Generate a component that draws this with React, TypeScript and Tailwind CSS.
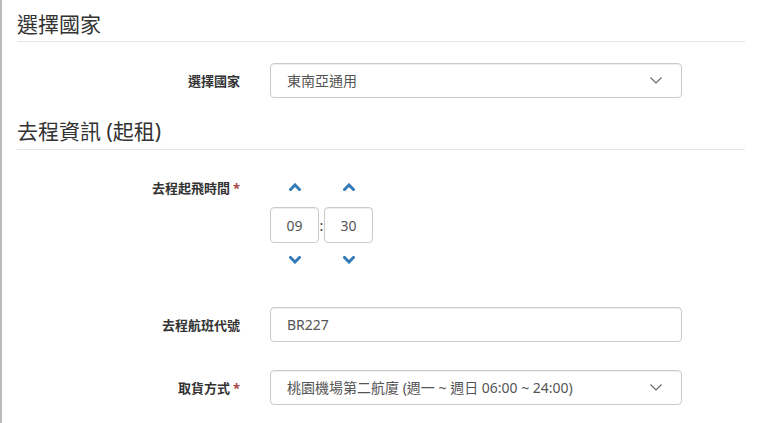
import type { ReactNode } from 'react'

const FONT = "font-['Segoe_UI','Noto_Sans','Noto_Sans_CJK_TC',sans-serif]"

function ChevronBold({ up }: { up?: boolean }) {
  return (
    <svg width="12" height="8" viewBox="0 0 12 8" className="block">
      <polyline
        points={up ? '1.5,6.5 6,2 10.5,6.5' : '1.5,1.5 6,6 10.5,1.5'}
        fill="none"
        stroke="#337ab7"
        strokeWidth="3"
        strokeLinecap="square"
      />
    </svg>
  )
}

function SelectCaret() {
  return (
    <svg width="12" height="7" viewBox="0 0 12 7" className="block">
      <polyline points="0.5,0.5 6,6 11.5,0.5" fill="none" stroke="#666" strokeWidth="1.1" />
    </svg>
  )
}

function SectionTitle({ children, className = '' }: { children: ReactNode; className?: string }) {
  return (
    <h3 className={`text-[21px] leading-[30px] font-normal text-[#333] border-b border-[#e5e5e5] pb-[2px] mr-[15px] ${className}`}>
      {children}
    </h3>
  )
}

function Label({ text, required, className = '' }: { text: string; required?: boolean; className?: string }) {
  return (
    <div className={`w-[223px] shrink-0 text-right text-[13px] font-bold text-[#333] leading-[20px] ${className}`}>
      {text}
      {required && <span className="text-[#a94442] ml-[3px]">*</span>}
    </div>
  )
}

function FakeSelect({ value }: { value: string }) {
  return (
    <div className="w-[412px] h-[35px] flex items-center justify-between pl-4 pr-[19px] border border-[#ccc] rounded-[4px] bg-white text-[14px] text-[#555] shadow-[inset_0_1px_1px_rgba(0,0,0,0.075)]">
      <span>{value}</span>
      <SelectCaret />
    </div>
  )
}

export default function App() {
  return (
    <div className={`${FONT} w-[760px] h-[423px] bg-white border-l-2 border-[#bbb] overflow-hidden`}>
      <div className="pl-[15px]">
        <SectionTitle className="pt-[9px]">選擇國家</SectionTitle>

        {/* country */}
        <div className="flex items-center mt-[21px]">
          <Label text="選擇國家" />
          <div className="ml-[30px]">
            <FakeSelect value="東南亞通用" />
          </div>
        </div>

        <SectionTitle className="mt-[18px] !pb-[3px]">去程資訊 (起租)</SectionTitle>

        {/* departure time */}
        <div className="flex items-start mt-[25px]">
          <Label text="去程起飛時間" required className="pt-[3px]" />
          <div className="ml-[30px] flex items-start">
            <div className="flex flex-col items-center w-[49px]">
              <div className="h-[24px] flex items-center justify-center"><ChevronBold up /></div>
              <div className="mt-[8px] w-[49px] h-[36px] flex items-center justify-center border border-[#ccc] rounded-[4px] text-[14px] text-[#555] shadow-[inset_0_1px_1px_rgba(0,0,0,0.075)]">09</div>
              <div className="mt-[5px] h-[24px] flex items-center justify-center"><ChevronBold /></div>
            </div>
            <div className="w-[5px] mt-[32px] h-[36px] flex items-center justify-center text-[14px] text-[#333]">:</div>
            <div className="flex flex-col items-center w-[49px]">
              <div className="h-[24px] flex items-center justify-center"><ChevronBold up /></div>
              <div className="mt-[8px] w-[49px] h-[36px] flex items-center justify-center border border-[#ccc] rounded-[4px] text-[14px] text-[#555] shadow-[inset_0_1px_1px_rgba(0,0,0,0.075)]">30</div>
              <div className="mt-[5px] h-[24px] flex items-center justify-center"><ChevronBold /></div>
            </div>
          </div>
        </div>

        {/* flight no */}
        <div className="flex items-center mt-[35px]">
          <Label text="去程航班代號" />
          <div className="ml-[30px] w-[412px] h-[35px] flex items-center pl-4 border border-[#ccc] rounded-[4px] text-[14px] text-[#555] shadow-[inset_0_1px_1px_rgba(0,0,0,0.075)]">
            BR227
          </div>
        </div>

        {/* pickup */}
        <div className="flex items-center mt-[28px]">
          <Label text="取貨方式" required />
          <div className="ml-[30px]">
            <FakeSelect value="桃園機場第二航廈 (週一 ~ 週日 06:00 ~ 24:00)" />
          </div>
        </div>
      </div>
    </div>
  )
}
